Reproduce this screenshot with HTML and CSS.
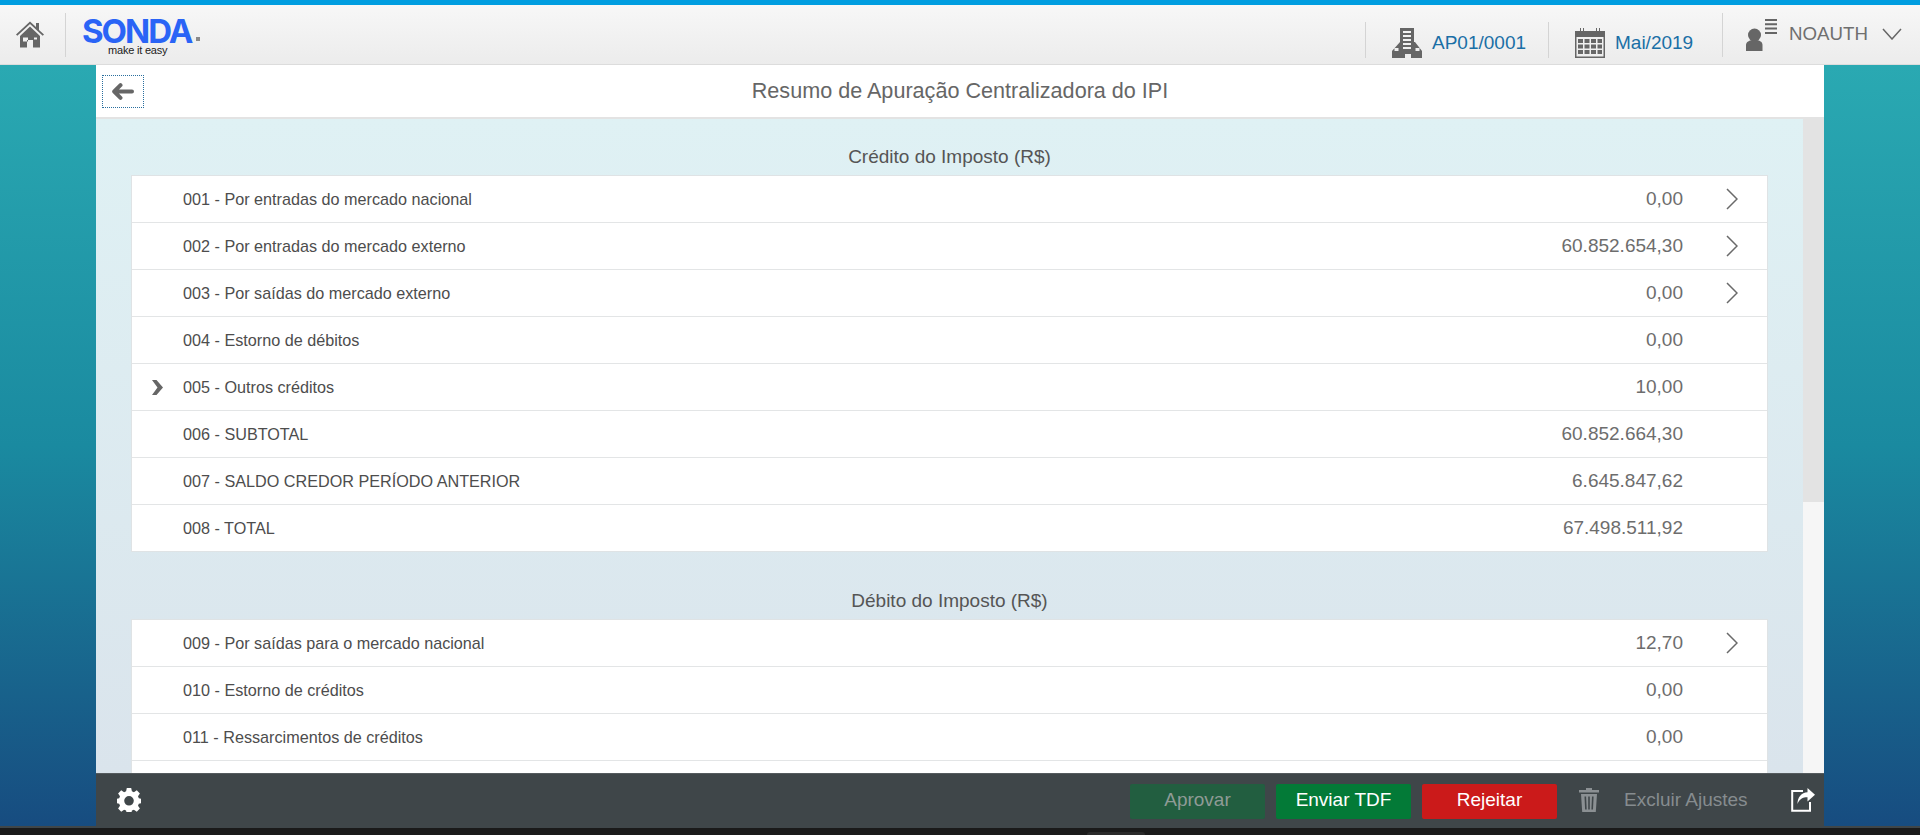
FILE: index.html
```html
<!DOCTYPE html>
<html lang="pt">
<head>
<meta charset="utf-8">
<title>Resumo de Apuração Centralizadora do IPI</title>
<link rel="stylesheet" href="styles.css">
</head>
<body>
<svg class="defs" width="0" height="0" aria-hidden="true">
  <symbol id="chev" viewBox="0 0 12 22"><path d="M1 1l10 10L1 21" fill="none" stroke="#6a6a6a" stroke-width="1.5"/></symbol>
</svg>
<header class="topbar">
  <div class="home">
    <svg width="30" height="28" viewBox="0 0 30 28"><path d="M1 14.5L15 1.5l6 5.5V3h3v7l5 4.500-1.300 1.300L15 4 2.300 15.800z" fill="#666"/><path fill-rule="evenodd" d="M5 16L15 6.500 25 16v11.500H18V20h-6v-0h0v7.500H5zM8 17.500v4h5v-4zM19 17.500v2h3v-2z" fill="#666"/></svg>
  </div>
  <div class="sep sep-tall sep-home"></div>
  <div class="logo">
    <div class="logo-word">SONDA<span class="logo-dot"></span></div>
    <div class="logo-tag">make it easy</div>
  </div>
  <div class="spacer"></div>
  <div class="sep sep-short"></div>
  <div class="ctx ctx-org">
    <svg width="30" height="30" viewBox="0 0 30 30"><path fill-rule="evenodd" d="M8 0h14v14l1 0 7 9v7H19v-4h-6v4H0v-7l8-9zM11 3v2h8V3zM11 7v2h8V7zM11 11v2h8v-2zM11 15v2h8v-2zM11 19v2h8v-2zM2.500 20v3h4v-3zM23.500 20v3h4v-3z" fill="#666"/></svg>
    <span class="ctx-text">AP01/0001</span>
  </div>
  <div class="sep sep-short"></div>
  <div class="ctx ctx-date">
    <svg width="30" height="30" viewBox="0 0 30 30"><path fill-rule="evenodd" d="M0 3h5V0h1v3h2V0h1v3h12V0h1v3h2V0h1v3h5v27H0zM1.500 9v19.500h27V9zM3 11h5v4H3zM9.500 11h5v4h-5zM16 11h5v4h-5zM22.500 11H27v4h-4.500zM3 16.500h5v4H3zM9.500 16.500h5v4h-5zM16 16.500h5v4h-5zM22.500 16.500H27v4h-4.500zM3 22h5v4H3zM9.500 22h5v4h-5zM16 22h5v4h-5zM22.500 22H27v4h-4.500z" fill="#666"/></svg>
    <span class="ctx-text">Mai/2019</span>
  </div>
  <div class="sep sep-tall"></div>
  <div class="user">
    <svg width="32" height="32" viewBox="0 0 32 32"><circle cx="8.500" cy="16" r="6.500" fill="#666"/><path d="M0 32v-6c0-3 3-5 8.500-5s8 2 8 5v6z" fill="#666"/><path d="M19 1h12M19 5.300h12M19 9.600h12M19 13.900h12" stroke="#666" stroke-width="2"/></svg>
    <span class="user-name">NOAUTH</span>
    <svg class="user-chev" width="20" height="12" viewBox="0 0 20 12"><path d="M1 1l9 10 9-10" fill="none" stroke="#666" stroke-width="1.500"/></svg>
  </div>
</header>

<div class="stage">
  <main class="app">
    <div class="subheader">
      <button class="back" type="button" aria-label="Voltar">
        <svg width="22" height="17" viewBox="0 0 22 17"><path d="M8.500 2.200L2.200 8.500l6.300 6.300M3 8.500h17" fill="none" stroke="#666" stroke-width="4" stroke-linecap="round" stroke-linejoin="round"/></svg>
      </button>
      <h1 class="title">Resumo de Apuração Centralizadora do IPI</h1>
    </div>
    <div class="body">
      <div class="panel">
        <section class="group">
          <h2 class="group-title">Crédito do Imposto (R$)</h2>
          <div class="card">
            <div class="row"><span class="mark"></span><span class="label">001 - Por entradas do mercado nacional</span><span class="value">0,00</span><svg class="go"><use href="#chev"/></svg></div>
            <div class="row"><span class="mark"></span><span class="label">002 - Por entradas do mercado externo</span><span class="value">60.852.654,30</span><svg class="go"><use href="#chev"/></svg></div>
            <div class="row"><span class="mark"></span><span class="label">003 - Por saídas do mercado externo</span><span class="value">0,00</span><svg class="go"><use href="#chev"/></svg></div>
            <div class="row"><span class="mark"></span><span class="label">004 - Estorno de débitos</span><span class="value">0,00</span><span class="nogo"></span></div>
            <div class="row"><span class="mark"><svg width="11" height="15" viewBox="0 0 11 15"><path d="M0 0h4.500L11 7.500 4.500 15H0l5.500-7.500z" fill="#666"/></svg></span><span class="label">005 - Outros créditos</span><span class="value">10,00</span><span class="nogo"></span></div>
            <div class="row"><span class="mark"></span><span class="label">006 - SUBTOTAL</span><span class="value">60.852.664,30</span><span class="nogo"></span></div>
            <div class="row"><span class="mark"></span><span class="label">007 - SALDO CREDOR PERÍODO ANTERIOR</span><span class="value">6.645.847,62</span><span class="nogo"></span></div>
            <div class="row"><span class="mark"></span><span class="label">008 - TOTAL</span><span class="value">67.498.511,92</span><span class="nogo"></span></div>
          </div>
        </section>
        <section class="group">
          <h2 class="group-title">Débito do Imposto (R$)</h2>
          <div class="card">
            <div class="row"><span class="mark"></span><span class="label">009 - Por saídas para o mercado nacional</span><span class="value">12,70</span><svg class="go"><use href="#chev"/></svg></div>
            <div class="row"><span class="mark"></span><span class="label">010 - Estorno de créditos</span><span class="value">0,00</span><span class="nogo"></span></div>
            <div class="row"><span class="mark"></span><span class="label">011 - Ressarcimentos de créditos</span><span class="value">0,00</span><span class="nogo"></span></div>
            <div class="row"></div>
          </div>
        </section>
      </div>
      <div class="track"><div class="thumb"></div></div>
    </div>
    <footer class="actions">
      <svg class="gear" width="24" height="24" viewBox="0 0 24 24"><path fill-rule="evenodd" d="M9.800 0h4.400l.7 3.300 2 .9L19.800 2.300 22.900 5.400 21 8.300l.8 2 3.200.7v4l-3.200.7-.8 2 1.900 2.900-3.100 3.100-2.900-1.900-2 .8-.7 3.300H9.800l-.7-3.300-2-.8-2.900 1.900-3.100-3.100L3 17.700l-.8-2L-1 15v-4l3.200-.7.800-2L1.100 5.400 4.200 2.300l2.900 1.900 2-.9zM12 8a4.800 4.800 0 1 0 0 9.600A4.800 4.800 0 0 0 12 8z" fill="#fff"/></svg>
      <div class="spacer"></div>
      <button class="btn btn-approve" type="button">Aprovar</button>
      <button class="btn btn-send" type="button">Enviar TDF</button>
      <button class="btn btn-reject" type="button">Rejeitar</button>
      <svg class="trash" width="22" height="24" viewBox="0 0 22 24"><path fill-rule="evenodd" d="M8 0h6v2h7v2.500H1V2h7zM3 6h16l-1.200 18H4.200zM6.500 8.500l.6 13h1.600l-.6-13zM10.200 8.500v13h1.600v-13zM14 8.500l-.6 13H15l.6-13z" fill="#8b9093"/></svg>
      <span class="remove">Excluir Ajustes</span>
      <svg class="share" width="24" height="24" viewBox="0 0 24 24"><path d="M12 3H1.200v19.800H19V14" fill="none" stroke="#fff" stroke-width="2"/><path d="M16.500 0L24 6.800l-7.500 6.700V9.300C11.500 9.300 8.500 11 6.500 16c0-7 4-11.500 10-11.800z" fill="#fff"/></svg>
    </footer>
  </main>
</div>
<div class="taskbar"><div class="task-tab"></div></div>
</body>
</html>
```
FILE: styles.css
```css
* { box-sizing: border-box; }
html, body { margin: 0; height: 100%; }
body {
  height: 835px;
  overflow: hidden;
  display: flex;
  flex-direction: column;
  font-family: "Liberation Sans", Arial, sans-serif;
  background: #1a1a1a;
}
.defs { position: absolute; }
.spacer { flex: 1; }

/* top bar */
.topbar {
  height: 65px;
  flex: none;
  display: flex;
  align-items: flex-start;
  border-top: 5px solid #009de0;
  border-bottom: 1px solid #dcdcdc;
  background: linear-gradient(#f7f7f7, #ececec);
}
.home { margin: 15px 0 0 15px; width: 30px; line-height: 0; }
.sep { width: 1px; background: #d4d4d4; flex: none; }
.sep-tall { height: 44px; margin-top: 8px; }
.sep-short { height: 36px; margin-top: 17px; }
.sep-home { margin-left: 20px; }
.logo { margin: 13px 0 0 16px; width: 126px; }
.logo-word {
  font-family: Inter, "Liberation Sans", sans-serif;
  font-weight: 700;
  font-size: 33px;
  line-height: 26px;
  letter-spacing: -2px;
  color: #2a64f6;
  display: flex;
  align-items: flex-end;
}
.logo-dot { width: 4px; height: 4px; margin: 0 0 3px 5px; background: #8a8a8a; }
.logo-tag {
  font-size: 11px;
  line-height: 12px;
  margin: 0 0 0 26px;
  color: #222;
  letter-spacing: -0.2px;
}
.ctx { display: flex; align-items: flex-start; margin-top: 23px; height: 36px; flex: none; }
.ctx-org { width: 182px; padding-left: 26px; }
.ctx-date { width: 173px; padding-left: 26px; }
.ctx-text { font-size: 19px; line-height: 30px; color: #1a6fa6; margin-left: 10px; }
.ctx svg { flex: none; }
.user { display: flex; align-items: flex-start; margin: 14px 18px 0 23px; }
.user-name { font-size: 18.700px; line-height: 30px; color: #6f6f6f; margin: 0 14px 0 11px; width: 79px; }
.user-chev { margin-top: 9px; }

/* stage */
.stage {
  flex: 1;
  min-height: 0;
  background: linear-gradient(#2aa9b2, #1a8aa0 50%, #174c80);
  display: flex;
  justify-content: center;
}
.app {
  width: 1728px;
  height: 763px;
  display: flex;
  flex-direction: column;
  position: relative;
  z-index: 1;
}
.subheader {
  height: 54px;
  flex: none;
  background: #fff;
  border-bottom: 2px solid #e3e3e3;
  position: relative;
  display: flex;
  justify-content: center;
  align-items: center;
}
.back {
  position: absolute;
  left: 6px;
  top: 10px;
  width: 42px;
  height: 33px;
  padding: 0;
  border: 1px dotted #2a6f9e;
  background: #fff;
  display: flex;
  align-items: center;
  justify-content: center;
}
.title { margin: 0; font-size: 21.600px; font-weight: 400; color: #666; line-height: 52px; }

.body { flex: 1; min-height: 0; display: flex; }
.panel {
  flex: 1;
  min-width: 0;
  overflow: hidden;
  padding: 20px 35px 0;
  background: linear-gradient(#dff1f4, #dae4ec);
}
.track { width: 21px; flex: none; background: #f6f6f6; }
.thumb { height: 383px; background: #e3e3e3; }

.group + .group { margin-top: 31px; }
.group-title {
  margin: 0;
  height: 36px;
  text-align: center;
  font-size: 19px;
  font-weight: 400;
  line-height: 36px;
  color: #555;
}
.card { background: #fff; border: 1px solid #dfe3e5; }
.row {
  height: 47px;
  display: flex;
  align-items: center;
  border-bottom: 1px solid #e3e5e6;
}
.row:last-child { border-bottom: 0; height: 46px; }
.mark { width: 51px; padding-left: 20px; flex: none; line-height: 0; }
.label { flex: 1; font-size: 16.200px; color: #4d4d4d; }
.value { font-size: 19px; color: #6d6d6d; }
.go { width: 12px; height: 22px; margin: -1px 29px 0 43px; flex: none; }
.nogo { width: 84px; flex: none; }

/* footer */
.actions {
  height: 55px;
  flex: none;
  display: flex;
  align-items: center;
  padding: 0 9px 2px 21px;
  background: #3f4649;
  border-top: 1px solid #555b5e;
}
.btn {
  width: 135px;
  height: 35px;
  margin: 2px 0 0 11px;
  padding: 0 0 2px;
  border: 0;
  border-radius: 2px;
  font: 19px "Liberation Sans", Arial, sans-serif;
  color: #fff;
}
.btn-approve { background: #225e40; color: #8f9b96; }
.btn-send { background: #037a37; }
.btn-reject { background: #cb1a1a; }
.trash { margin-left: 21px; flex: none; }
.remove { margin-left: 24px; font-size: 19px; color: #868c8f; width: 122px; white-space: nowrap; }
.share { margin-left: 45px; flex: none; }

.taskbar {
  height: 9px;
  flex: none;
  background: #1a1a1a;
  border-top: 2px solid #3f4649;
  padding: 4px 0 0 1087px;
}
.task-tab { width: 58px; height: 3px; background: #2a2a2a; border-radius: 4px 4px 0 0; }
```
